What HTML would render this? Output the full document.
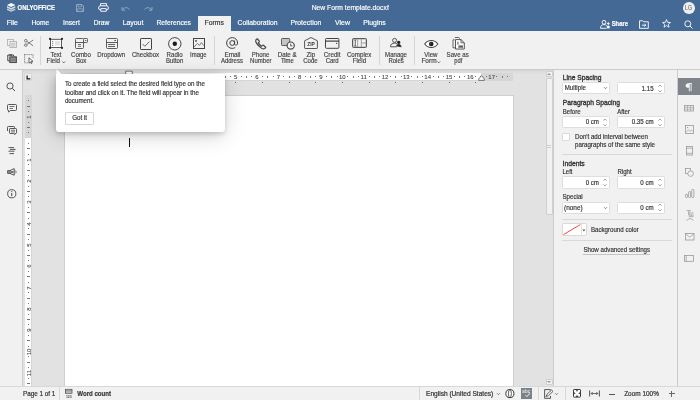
<!DOCTYPE html>
<html><head><meta charset="utf-8">
<style>
*{margin:0;padding:0;box-sizing:border-box}
html,body{width:700px;height:400px;overflow:hidden;background:#e2e2e2;font-family:"Liberation Sans",sans-serif;color:#333;-webkit-text-stroke:0.08px currentColor}
.a{position:absolute}
.t{position:absolute;white-space:nowrap;line-height:1}
#hdr{left:0;top:0;width:700px;height:31px;background:#446995}
#tb{left:0;top:31px;width:700px;height:39px;background:#f1f1f1;border-bottom:1px solid #cbcbcb}
#lp{left:0;top:70px;width:23px;height:316px;background:#f1f1f1;border-right:1px solid #cbcbcb}
#rp{left:552.5px;top:70px;width:125.5px;height:316px;background:#f1f1f1;border-left:1px solid #cbcbcb;border-right:1px solid #cbcbcb}
#rs{left:678px;top:70px;width:22px;height:316px;background:#f1f1f1}
#sb{left:0;top:386px;width:700px;height:14px;background:#f1f1f1;border-top:1px solid #d8d8d8}
.sep{position:absolute;width:1px;background:#d5d5d5}
svg{position:absolute;overflow:visible}
.tx text{font-family:"Liberation Sans",sans-serif}
</style></head><body>
<div id="root" class="a" style="left:0;top:0;width:700px;height:400px;background:#e2e2e2;will-change:transform">
<div id="hdr" class="a"></div>
<svg style="left:6.8px;top:3.4px" width="8.3" height="8.8" viewBox="0 0 8.3 8.8">
<path d="M4.15 0 L8.3 2 L4.15 4 L0 2Z" fill="#fff"/>
<path d="M0 3 L4.15 5 L8.3 3 V4.7 L4.15 6.7 L0 4.7Z" fill="#fff" opacity="0.78"/>
<path d="M0 5.4 L4.15 7.2 L8.3 5.4 V6.9 L4.15 8.8 L0 6.9Z" fill="#fff" opacity="0.7"/>
</svg>
<svg class="tx" style="left:15px;top:0px" width="45" height="14"><text x="2.60" y="10.20" font-size="6.50" fill="#fff" font-weight="bold" textLength="37.20" lengthAdjust="spacingAndGlyphs" stroke="#fff" stroke-width="0.16">ONLYOFFICE</text></svg>
<svg style="left:76px;top:4px" width="8" height="8" viewBox="0 0 8 8" opacity="0.45">
<path d="M0.5 0.5 H6 L7.5 2 V7.5 H0.5Z" fill="none" stroke="#fff" stroke-width="0.9"/>
<path d="M2 0.5 V2.8 H5.5 V0.5" fill="none" stroke="#fff" stroke-width="0.8"/>
<path d="M1.8 7.5 V4.8 H6.2 V7.5" fill="none" stroke="#fff" stroke-width="0.8"/>
</svg>
<svg style="left:97.5px;top:3.2px" width="11" height="9" viewBox="0 0 11 9">
<path d="M2.5 2.8 V0.6 H8.5 V2.8" fill="none" stroke="#fff" stroke-width="0.9"/>
<rect x="0.6" y="2.8" width="9.8" height="4.2" rx="2" fill="none" stroke="#fff" stroke-width="1"/>
<path d="M2.8 5.6 H8.2 V8.3 H2.8Z" fill="#446995" stroke="#fff" stroke-width="0.9"/>
</svg>
<svg style="left:121px;top:5.5px" width="9" height="5" viewBox="0 0 9 5" opacity="0.45">
<path d="M1 1 V4.2 H4" fill="none" stroke="#fff" stroke-width="0.9"/>
<path d="M1.2 4 C3 1.2 6.5 0.8 8.6 3.6" fill="none" stroke="#fff" stroke-width="0.9"/>
</svg>
<svg style="left:143.5px;top:5.5px" width="9" height="5" viewBox="0 0 9 5" opacity="0.45">
<path d="M8 1 V4.2 H5" fill="none" stroke="#fff" stroke-width="0.9"/>
<path d="M7.8 4 C6 1.2 2.5 0.8 0.4 3.6" fill="none" stroke="#fff" stroke-width="0.9"/>
</svg>
<svg class="tx" style="left:309px;top:0px" width="85" height="14"><text x="2.70" y="10.00" font-size="6.77" fill="#fff" stroke="#fff" stroke-width="0.16">New Form template.docxf</text></svg>
<div class="a" style="left:683px;top:2.4px;width:11.6px;height:11.6px;border-radius:50%;background:#eeeeee"></div>
<svg class="tx" style="left:683px;top:-1px" width="15" height="14"><text x="2.10" y="10.80" font-size="6.40" fill="#5f6670" textLength="6.90" lengthAdjust="spacingAndGlyphs" stroke="#5f6670" stroke-width="0.10">LG</text></svg>
<div class="a" style="left:198px;top:16px;width:33px;height:15px;background:#f1f1f1"></div>
<svg class="tx" style="left:4px;top:15px" width="19" height="14"><text x="2.70" y="10.20" font-size="7.01" fill="#fff" stroke="#fff" stroke-width="0.16">File</text></svg>
<svg class="tx" style="left:29px;top:15px" width="26" height="14"><text x="2.50" y="10.20" font-size="6.80" fill="#fff" textLength="17.70" lengthAdjust="spacingAndGlyphs" stroke="#fff" stroke-width="0.16">Home</text></svg>
<svg class="tx" style="left:61px;top:15px" width="25" height="14"><text x="2.00" y="10.20" font-size="6.80" fill="#fff" stroke="#fff" stroke-width="0.16">Insert</text></svg>
<svg class="tx" style="left:91px;top:15px" width="24" height="14"><text x="2.70" y="10.20" font-size="6.80" fill="#fff" textLength="15.60" lengthAdjust="spacingAndGlyphs" stroke="#fff" stroke-width="0.16">Draw</text></svg>
<svg class="tx" style="left:120px;top:15px" width="29" height="14"><text x="2.70" y="10.20" font-size="6.86" fill="#fff" stroke="#fff" stroke-width="0.16">Layout</text></svg>
<svg class="tx" style="left:154px;top:15px" width="43" height="14"><text x="2.40" y="10.20" font-size="6.80" fill="#fff" textLength="34.60" lengthAdjust="spacingAndGlyphs" stroke="#fff" stroke-width="0.16">References</text></svg>
<svg class="tx" style="left:202px;top:15px" width="27" height="14"><text x="2.60" y="10.20" font-size="6.85" fill="#333" stroke="#333" stroke-width="0.16">Forms</text></svg>
<svg class="tx" style="left:235px;top:15px" width="48" height="14"><text x="2.50" y="10.20" font-size="6.80" fill="#fff" textLength="40.00" lengthAdjust="spacingAndGlyphs" stroke="#fff" stroke-width="0.16">Collaboration</text></svg>
<svg class="tx" style="left:288px;top:15px" width="39" height="14"><text x="2.40" y="10.20" font-size="6.89" fill="#fff" stroke="#fff" stroke-width="0.16">Protection</text></svg>
<svg class="tx" style="left:333px;top:15px" width="23" height="14"><text x="2.00" y="10.20" font-size="6.98" fill="#fff" stroke="#fff" stroke-width="0.16">View</text></svg>
<svg class="tx" style="left:361px;top:15px" width="30" height="14"><text x="2.20" y="10.20" font-size="6.86" fill="#fff" stroke="#fff" stroke-width="0.16">Plugins</text></svg>
<svg style="left:599.5px;top:19.5px" width="11" height="9" viewBox="0 0 11 9">
<circle cx="4" cy="2.3" r="1.9" fill="none" stroke="#fff" stroke-width="0.9"/>
<path d="M0.5 8.3 C0.5 5.5 2 4.6 4 4.6 C5.3 4.6 6.2 5 6.8 5.8" fill="none" stroke="#fff" stroke-width="0.9"/>
<path d="M0.5 8.3 H6.5" fill="none" stroke="#fff" stroke-width="0.9"/>
<circle cx="8.3" cy="7" r="1.6" fill="#fff"/>
<path d="M8.3 2.2 V5 M6.9 3.6 H9.7" stroke="#fff" stroke-width="0.9"/>
</svg>
<svg class="tx" style="left:609px;top:16px" width="24" height="14"><text x="2.70" y="10.20" font-size="6.40" fill="#fff" font-weight="bold" textLength="16.30" lengthAdjust="spacingAndGlyphs" stroke="#fff" stroke-width="0.16">Share</text></svg>
<svg style="left:638.5px;top:19.5px" width="10" height="9" viewBox="0 0 10 9">
<path d="M0.5 0.8 H3.8 L4.8 1.8 H9.3 V8.3 H0.5Z" fill="none" stroke="#fff" stroke-width="0.9"/>
<path d="M2.8 5.2 H6.8 M5.3 3.7 L6.8 5.2 L5.3 6.7" fill="none" stroke="#fff" stroke-width="0.9"/>
</svg>
<svg style="left:661.5px;top:19px" width="9" height="9" viewBox="0 0 9 9">
<path d="M4.5 0.6 L5.6 3.3 L8.5 3.5 L6.3 5.3 L7 8.2 L4.5 6.6 L2 8.2 L2.7 5.3 L0.5 3.5 L3.4 3.3Z" fill="none" stroke="#fff" stroke-width="0.85" stroke-linejoin="round"/>
</svg>
<svg style="left:684px;top:19.5px" width="9" height="9" viewBox="0 0 9 9">
<circle cx="3.8" cy="3.8" r="3" fill="none" stroke="#fff" stroke-width="0.9"/>
<path d="M6 6 L8.5 8.5" stroke="#fff" stroke-width="1"/>
</svg>
<div id="tb" class="a"></div>
<svg style="left:7px;top:38.5px" width="10" height="9" viewBox="0 0 10 9" opacity="0.35">
<rect x="0.5" y="0.5" width="6" height="6" fill="none" stroke="#444" stroke-width="0.9"/>
<rect x="3" y="2.5" width="6.5" height="6" fill="#f1f1f1" stroke="#444" stroke-width="0.9"/>
<path d="M4 4.3 H8.5 M4 5.7 H8.5 M4 7.1 H8.5" stroke="#444" stroke-width="0.7"/>
</svg>
<svg style="left:23.8px;top:39px" width="10" height="8" viewBox="0 0 10 8">
<circle cx="1.8" cy="1.7" r="1.3" fill="none" stroke="#555" stroke-width="0.75"/>
<circle cx="1.8" cy="6.1" r="1.3" fill="none" stroke="#555" stroke-width="0.75"/>
<path d="M2.9 2.4 L9.2 6.8 M2.9 5.4 L9.2 1" stroke="#555" stroke-width="0.75"/>
</svg>
<svg style="left:7px;top:53.5px" width="10" height="9" viewBox="0 0 10 9">
<path d="M6.5 2 V1 H0.8 V6.8 H2.6" fill="none" stroke="#444" stroke-width="1"/>
<rect x="2.3" y="0.3" width="2.6" height="1.4" fill="#444"/>
<rect x="2.8" y="2.8" width="6.6" height="5.8" fill="#777" stroke="#444" stroke-width="0.9"/>
<path d="M3.5 4.5 H8.7 M3.5 6 H8.7 M3.5 7.4 H8.7" stroke="#aaa" stroke-width="0.5"/>
</svg>
<svg style="left:23.8px;top:53.5px" width="10" height="10" viewBox="0 0 10 10">
<path d="M0.5 0.6 H9 M0.6 0.5 V8.8" stroke="#444" stroke-width="0.9" stroke-dasharray="0.9 1.2"/>
<path d="M9 0.6 V4 M0.6 8.8 H4" stroke="#444" stroke-width="0.9" stroke-dasharray="0.9 1.2"/>
<path d="M5 3.8 L5 9.2 L6.3 8 L7.3 9.6 L8.1 9.1 L7.2 7.6 L9 7.4Z" fill="#fff" stroke="#444" stroke-width="0.8" stroke-linejoin="round"/>
</svg>
<div class="sep" style="left:39.5px;top:35.5px;height:29px"></div>
<svg style="left:49px;top:38px" width="14" height="11" viewBox="0 0 14 11">
<rect x="1.5" y="1.3" width="11" height="8.2" fill="#fff" stroke="#4a4a4a" stroke-width="0.9"/>
<rect x="5.8" y="2.9" width="5" height="4.6" fill="#e2e2e2"/>
<path d="M3.7 2.8 V8" stroke="#444" stroke-width="0.9" stroke-dasharray="1 1"/>
<circle cx="1" cy="0.9" r="1.05" fill="#222"/><circle cx="13" cy="0.9" r="1.05" fill="#222"/>
<circle cx="1" cy="9.9" r="1.05" fill="#222"/><circle cx="13" cy="9.9" r="1.05" fill="#222"/>
</svg>
<svg style="left:75px;top:38px" width="13" height="11" viewBox="0 0 13 11">
<rect x="0.5" y="0.5" width="8" height="10" rx="1" fill="none" stroke="#4d4d4d" stroke-width="0.9"/>
<path d="M8.5 0.5 H11.7 Q12.5 0.5 12.5 1.3 V3.7 Q12.5 4.5 11.7 4.5 H8.5" fill="none" stroke="#4d4d4d" stroke-width="0.9"/>
<path d="M0.5 4.5 H8.5" stroke="#4d4d4d" stroke-width="0.9"/>
<path d="M10.1 2.5 H11.3" stroke="#444" stroke-width="0.9"/>
<path d="M3 6.5 H6 M3 8.3 H6" stroke="#555" stroke-width="0.8"/>
</svg>
<svg style="left:106px;top:38px" width="12" height="11" viewBox="0 0 12 11">
<rect x="0.5" y="0.5" width="11" height="10" rx="1" fill="none" stroke="#4d4d4d" stroke-width="0.9"/>
<path d="M0.5 4.5 H11.5" stroke="#4d4d4d" stroke-width="0.9"/>
<path d="M8.3 2.5 H10" stroke="#444" stroke-width="0.9"/>
<path d="M2 6.5 H9 M2 8.5 H9" stroke="#555" stroke-width="0.9"/>
</svg>
<svg style="left:140px;top:38px" width="12" height="12" viewBox="0 0 12 12">
<rect x="0.5" y="0.5" width="11" height="11" rx="0.6" fill="none" stroke="#444" stroke-width="1"/>
<path d="M2.6 6 L4.8 8.3 L9.4 3.6" fill="none" stroke="#555" stroke-width="0.85"/>
</svg>
<svg style="left:168.2px;top:36.6px" width="14" height="14" viewBox="0 0 14 14">
<circle cx="6.8" cy="6.8" r="6.2" fill="none" stroke="#444" stroke-width="1"/>
<circle cx="6.8" cy="6.8" r="2.2" fill="#1a1a1a"/>
</svg>
<svg style="left:193px;top:38px" width="12" height="11" viewBox="0 0 12 11">
<rect x="0.5" y="0.5" width="11" height="10" fill="none" stroke="#444" stroke-width="1"/>
<circle cx="3" cy="2.9" r="0.9" fill="#444"/>
<path d="M1 9.2 L4.3 5.4 L6.4 7.4 L8.4 4.6 L11 7.8" fill="none" stroke="#555" stroke-width="0.75"/>
</svg>
<div class="sep" style="left:214.3px;top:35.5px;height:29px"></div>
<svg style="left:226px;top:37.4px" width="12.5" height="12" viewBox="0 0 12.5 12">
<circle cx="6.2" cy="6" r="2.4" fill="none" stroke="#444" stroke-width="1"/>
<path d="M8.6 3.5 V7 C8.6 8.8 11.6 8.8 11.6 6 C11.6 2.8 9.2 0.6 6.2 0.6 C3.1 0.6 0.6 3 0.6 6 C0.6 9.1 3.1 11.4 6.2 11.4 C7.4 11.4 8.4 11 9.2 10.6" fill="none" stroke="#444" stroke-width="1"/>
</svg>
<svg style="left:255px;top:37.5px" width="12" height="12" viewBox="0 0 12 12">
<path d="M2.6 1 L4.2 3.1 Q4.5 3.6 4.1 4.1 L3.3 4.9 Q4.4 7 6.6 8.2 L7.4 7.4 Q7.9 7 8.4 7.3 L10.5 8.9 Q10.9 9.3 10.5 9.8 L9.7 10.5 Q8.6 11.3 6.6 10.2 Q3.2 8.2 1.3 4.9 Q0.2 2.9 1 1.8 L1.7 1.1 Q2.2 0.7 2.6 1Z" fill="none" stroke="#4a4a4a" stroke-width="1.25" stroke-linejoin="round"/>
</svg>
<svg style="left:281px;top:38px" width="14" height="12" viewBox="0 0 14 12">
<rect x="0.5" y="0.5" width="8.2" height="7" rx="0.8" fill="#c4c4c4" stroke="#4d4d4d" stroke-width="0.9"/>
<circle cx="9.7" cy="7.6" r="3.6" fill="#f4f4f4" stroke="#4a4a4a" stroke-width="1.2"/>
<path d="M9.7 5.6 V7.9 H11.4" fill="none" stroke="#444" stroke-width="0.85"/>
</svg>
<svg style="left:304px;top:37px" width="14" height="12" viewBox="0 0 14 12">
<path d="M0.6 3.8 L7 0.5 L13.4 3.8 V10.9 Q13.4 11.5 12.8 11.5 H1.2 Q0.6 11.5 0.6 10.9Z" fill="none" stroke="#4d4d4d" stroke-width="0.95" stroke-linejoin="round"/>
<text x="7" y="9.3" font-family="Liberation Sans" font-weight="bold" font-size="4.9" text-anchor="middle" fill="#3a3a3a" style="-webkit-text-stroke:0">ZIP</text>
</svg>
<svg style="left:325.4px;top:38.2px" width="14.5" height="11" viewBox="0 0 14.5 11">
<rect x="0.5" y="0.5" width="13.4" height="9.8" rx="0.8" fill="none" stroke="#444" stroke-width="1"/>
<path d="M0.5 3.1 H13.9" stroke="#333" stroke-width="1.1"/>
<rect x="11" y="4.8" width="1.2" height="1" fill="#333"/>
</svg>
<svg style="left:352px;top:38px" width="15" height="10" viewBox="0 0 15 10">
<rect x="0.5" y="0.5" width="14" height="9" rx="1" fill="#a8a8a8" stroke="#4d4d4d" stroke-width="0.9"/>
<rect x="1.5" y="1.5" width="3.6" height="7" fill="#f4f4f4"/>
<path d="M2.3 2 H4.3 M3.3 2 V8 M2.3 8 H4.3" stroke="#333" stroke-width="0.7"/>
<rect x="6.2" y="1.5" width="2.6" height="7" fill="#f4f4f4"/>
<rect x="9.9" y="1.5" width="3.6" height="2.9" fill="#f4f4f4"/>
<rect x="9.9" y="5.6" width="3.6" height="2.9" fill="#f4f4f4"/>
</svg>
<div class="sep" style="left:378.5px;top:35.5px;height:29px"></div>
<svg style="left:390.3px;top:38.3px" width="12" height="10" viewBox="0 0 12 10">
<circle cx="4.6" cy="2.4" r="2" fill="none" stroke="#444" stroke-width="0.9"/>
<path d="M0.5 8.8 C0.5 6.2 2.2 5.1 4.6 5.1 C5.6 5.1 6.4 5.3 7 5.7" fill="none" stroke="#444" stroke-width="0.9"/>
<path d="M0.5 8.8 H6.8" stroke="#444" stroke-width="0.9"/>
<circle cx="8.7" cy="4.3" r="1.6" fill="#222"/>
<path d="M6.6 8.2 C6.6 6.8 7.5 6.2 8.7 6.2 C9.9 6.2 10.8 6.8 10.8 8.2 L11.3 9.2" fill="#222" stroke="#222" stroke-width="0.6"/>
</svg>
<div class="sep" style="left:413.8px;top:35.5px;height:29px"></div>
<svg style="left:423.5px;top:39.5px" width="14.5" height="8" viewBox="0 0 14.5 8">
<path d="M0.7 4 C2.6 1.3 4.7 0.55 7.25 0.55 C9.8 0.55 11.9 1.3 13.8 4 C11.9 6.7 9.8 7.45 7.25 7.45 C4.7 7.45 2.6 6.7 0.7 4Z" fill="#fff" stroke="#444" stroke-width="1.05"/>
<circle cx="7.25" cy="4" r="2.3" fill="#1e1e1e"/>
<circle cx="6.6" cy="3.4" r="0.5" fill="#888"/>
</svg>
<svg style="left:452px;top:37.2px" width="13" height="12.5" viewBox="0 0 13 12.5">
<path d="M2.5 2.8 H1 V10.8 H3.5" fill="none" stroke="#444" stroke-width="0.8"/>
<path d="M2.8 0.5 H6.8 L8 1.7" fill="none" stroke="#444" stroke-width="0.8"/>
<path d="M3.5 2.6 H9 L12.3 5.8 V12 H3.5Z" fill="#fff" stroke="#444" stroke-width="0.9"/>
<path d="M9 2.6 V5.8 H12.3" fill="none" stroke="#444" stroke-width="0.8"/>
<path d="M5.2 7.6 C6 7 5.4 5.6 5.9 4.8 C6.4 5.6 5.8 7 6.8 7.6" fill="none" stroke="#444" stroke-width="0.6"/>
<rect x="6.4" y="8.4" width="4.6" height="2.4" fill="#666"/>
</svg>
<svg class="tx" style="left:48px;top:47px" width="19" height="14"><text x="2.40" y="10.10" font-size="6.40" fill="#444" textLength="11.00" lengthAdjust="spacingAndGlyphs" stroke="#444" stroke-width="0.16">Text</text></svg>
<svg class="tx" style="left:44px;top:53px" width="22" height="14"><text x="2.60" y="10.10" font-size="6.40" fill="#444" textLength="13.50" lengthAdjust="spacingAndGlyphs" stroke="#444" stroke-width="0.16">Field</text></svg>
<svg class="tx" style="left:69px;top:47px" width="28" height="14"><text x="2.00" y="10.10" font-size="6.40" fill="#444" textLength="19.90" lengthAdjust="spacingAndGlyphs" stroke="#444" stroke-width="0.16">Combo</text></svg>
<svg class="tx" style="left:73px;top:53px" width="18" height="14"><text x="2.90" y="10.10" font-size="6.40" fill="#444" textLength="10.50" lengthAdjust="spacingAndGlyphs" stroke="#444" stroke-width="0.16">Box</text></svg>
<svg class="tx" style="left:95px;top:47px" width="36" height="14"><text x="2.30" y="10.10" font-size="6.40" fill="#444" textLength="27.90" lengthAdjust="spacingAndGlyphs" stroke="#444" stroke-width="0.16">Dropdown</text></svg>
<svg class="tx" style="left:129px;top:47px" width="35" height="14"><text x="2.90" y="10.10" font-size="6.40" fill="#444" textLength="27.30" lengthAdjust="spacingAndGlyphs" stroke="#444" stroke-width="0.16">Checkbox</text></svg>
<svg class="tx" style="left:164px;top:47px" width="24" height="14"><text x="2.60" y="10.10" font-size="6.40" fill="#444" textLength="16.00" lengthAdjust="spacingAndGlyphs" stroke="#444" stroke-width="0.16">Radio</text></svg>
<svg class="tx" style="left:163px;top:53px" width="25" height="14"><text x="2.90" y="10.10" font-size="6.40" fill="#444" textLength="17.40" lengthAdjust="spacingAndGlyphs" stroke="#444" stroke-width="0.16">Button</text></svg>
<svg class="tx" style="left:188px;top:47px" width="25" height="14"><text x="2.10" y="10.10" font-size="6.40" fill="#444" textLength="16.60" lengthAdjust="spacingAndGlyphs" stroke="#444" stroke-width="0.16">Image</text></svg>
<svg class="tx" style="left:222px;top:47px" width="24" height="14"><text x="2.40" y="10.10" font-size="6.40" fill="#444" stroke="#444" stroke-width="0.16">Email</text></svg>
<svg class="tx" style="left:218px;top:53px" width="30" height="14"><text x="2.90" y="10.10" font-size="6.40" fill="#444" textLength="22.10" lengthAdjust="spacingAndGlyphs" stroke="#444" stroke-width="0.16">Address</text></svg>
<svg class="tx" style="left:249px;top:47px" width="26" height="14"><text x="2.70" y="10.10" font-size="6.40" fill="#444" textLength="17.60" lengthAdjust="spacingAndGlyphs" stroke="#444" stroke-width="0.16">Phone</text></svg>
<svg class="tx" style="left:248px;top:53px" width="29" height="14"><text x="2.10" y="10.10" font-size="6.40" fill="#444" textLength="21.40" lengthAdjust="spacingAndGlyphs" stroke="#444" stroke-width="0.16">Number</text></svg>
<svg class="tx" style="left:275px;top:47px" width="27" height="14"><text x="2.70" y="10.10" font-size="6.40" fill="#444" textLength="19.00" lengthAdjust="spacingAndGlyphs" stroke="#444" stroke-width="0.16">Date &amp;</text></svg>
<svg class="tx" style="left:278px;top:53px" width="21" height="14"><text x="2.90" y="10.10" font-size="6.40" fill="#444" textLength="12.90" lengthAdjust="spacingAndGlyphs" stroke="#444" stroke-width="0.16">Time</text></svg>
<svg class="tx" style="left:304px;top:47px" width="17" height="14"><text x="2.40" y="10.10" font-size="6.40" fill="#444" textLength="8.80" lengthAdjust="spacingAndGlyphs" stroke="#444" stroke-width="0.16">Zip</text></svg>
<svg class="tx" style="left:301px;top:53px" width="22" height="14"><text x="2.20" y="10.10" font-size="6.40" fill="#444" textLength="14.50" lengthAdjust="spacingAndGlyphs" stroke="#444" stroke-width="0.16">Code</text></svg>
<svg class="tx" style="left:321px;top:47px" width="25" height="14"><text x="2.80" y="10.10" font-size="6.40" fill="#444" textLength="16.70" lengthAdjust="spacingAndGlyphs" stroke="#444" stroke-width="0.16">Credit</text></svg>
<svg class="tx" style="left:323px;top:53px" width="21" height="14"><text x="2.70" y="10.10" font-size="6.40" fill="#444" textLength="12.90" lengthAdjust="spacingAndGlyphs" stroke="#444" stroke-width="0.16">Card</text></svg>
<svg class="tx" style="left:344px;top:47px" width="32" height="14"><text x="2.90" y="10.10" font-size="6.40" fill="#444" textLength="24.40" lengthAdjust="spacingAndGlyphs" stroke="#444" stroke-width="0.16">Complex</text></svg>
<svg class="tx" style="left:350px;top:53px" width="22" height="14"><text x="2.70" y="10.10" font-size="6.40" fill="#444" textLength="13.50" lengthAdjust="spacingAndGlyphs" stroke="#444" stroke-width="0.16">Field</text></svg>
<svg class="tx" style="left:383px;top:47px" width="30" height="14"><text x="2.10" y="10.10" font-size="6.40" fill="#444" textLength="21.90" lengthAdjust="spacingAndGlyphs" stroke="#444" stroke-width="0.16">Manage</text></svg>
<svg class="tx" style="left:386px;top:53px" width="23" height="14"><text x="2.40" y="10.10" font-size="6.40" fill="#444" textLength="15.40" lengthAdjust="spacingAndGlyphs" stroke="#444" stroke-width="0.16">Roles</text></svg>
<svg class="tx" style="left:422px;top:47px" width="21" height="14"><text x="2.30" y="10.10" font-size="6.40" fill="#444" textLength="13.20" lengthAdjust="spacingAndGlyphs" stroke="#444" stroke-width="0.16">View</text></svg>
<svg class="tx" style="left:419px;top:53px" width="23" height="14"><text x="2.40" y="10.10" font-size="6.52" fill="#444" stroke="#444" stroke-width="0.16">Form</text></svg>
<svg class="tx" style="left:444px;top:47px" width="30" height="14"><text x="2.60" y="10.10" font-size="6.40" fill="#444" textLength="22.10" lengthAdjust="spacingAndGlyphs" stroke="#444" stroke-width="0.16">Save as</text></svg>
<svg class="tx" style="left:452px;top:53px" width="16" height="14"><text x="2.30" y="10.10" font-size="6.40" fill="#444" textLength="8.00" lengthAdjust="spacingAndGlyphs" stroke="#444" stroke-width="0.16">pdf</text></svg>
<svg style="left:61.7px;top:60.6px" width="3.5" height="2.5" viewBox="0 0 3.5 2.5"><path d="M0.4 0.5 L1.75 1.9 L3.1 0.5" fill="none" stroke="#444" stroke-width="0.8"/></svg>
<svg style="left:437.2px;top:60.6px" width="3.5" height="2.5" viewBox="0 0 3.5 2.5"><path d="M0.4 0.5 L1.75 1.9 L3.1 0.5" fill="none" stroke="#444" stroke-width="0.8"/></svg>
<div class="a" style="left:23px;top:70px;width:530px;height:4px;background:linear-gradient(#d6d6d6,#e2e2e2)"></div>
<div class="a" style="left:24.2px;top:73.2px;width:7.6px;height:8.3px;background:#efefef;border:0.6px solid #d6d6d6;border-radius:1px"></div>
<svg style="left:26px;top:75px" width="5" height="5" viewBox="0 0 5 5"><path d="M1.1 0.4 V3.9 H4.3" fill="none" stroke="#111" stroke-width="1.15"/></svg>
<div class="a" style="left:65px;top:73px;width:448px;height:7.5px;background:#d6d6d6"></div>
<div class="a" style="left:129px;top:73.3px;width:352px;height:7px;background:#fff"></div>
<div class="a" style="left:69.83px;top:76.3px;width:1px;height:1px;background:#777"></div>
<div class="a" style="left:75.17px;top:75.6px;width:1px;height:2.4px;background:#777"></div>
<div class="a" style="left:80.50px;top:76.3px;width:1px;height:1px;background:#777"></div>
<div class="t" style="left:76.33px;width:20px;text-align:center;top:74.3px;font-size:6px;color:#444">2</div>
<div class="a" style="left:91.17px;top:76.3px;width:1px;height:1px;background:#777"></div>
<div class="a" style="left:96.50px;top:75.6px;width:1px;height:2.4px;background:#777"></div>
<div class="a" style="left:101.83px;top:76.3px;width:1px;height:1px;background:#777"></div>
<div class="t" style="left:97.67px;width:20px;text-align:center;top:74.3px;font-size:6px;color:#444">1</div>
<div class="a" style="left:112.50px;top:76.3px;width:1px;height:1px;background:#777"></div>
<div class="a" style="left:117.83px;top:75.6px;width:1px;height:2.4px;background:#777"></div>
<div class="a" style="left:123.17px;top:76.3px;width:1px;height:1px;background:#777"></div>
<div class="a" style="left:133.83px;top:76.3px;width:1px;height:1px;background:#777"></div>
<div class="a" style="left:139.17px;top:75.6px;width:1px;height:2.4px;background:#777"></div>
<div class="a" style="left:144.50px;top:76.3px;width:1px;height:1px;background:#777"></div>
<div class="t" style="left:140.33px;width:20px;text-align:center;top:74.3px;font-size:6px;color:#444">1</div>
<div class="a" style="left:155.17px;top:76.3px;width:1px;height:1px;background:#777"></div>
<div class="a" style="left:160.50px;top:75.6px;width:1px;height:2.4px;background:#777"></div>
<div class="a" style="left:165.83px;top:76.3px;width:1px;height:1px;background:#777"></div>
<div class="t" style="left:161.67px;width:20px;text-align:center;top:74.3px;font-size:6px;color:#444">2</div>
<div class="a" style="left:176.50px;top:76.3px;width:1px;height:1px;background:#777"></div>
<div class="a" style="left:181.83px;top:75.6px;width:1px;height:2.4px;background:#777"></div>
<div class="a" style="left:187.17px;top:76.3px;width:1px;height:1px;background:#777"></div>
<div class="t" style="left:183.00px;width:20px;text-align:center;top:74.3px;font-size:6px;color:#444">3</div>
<div class="a" style="left:197.83px;top:76.3px;width:1px;height:1px;background:#777"></div>
<div class="a" style="left:203.17px;top:75.6px;width:1px;height:2.4px;background:#777"></div>
<div class="a" style="left:208.50px;top:76.3px;width:1px;height:1px;background:#777"></div>
<div class="t" style="left:204.33px;width:20px;text-align:center;top:74.3px;font-size:6px;color:#444">4</div>
<div class="a" style="left:219.17px;top:76.3px;width:1px;height:1px;background:#777"></div>
<div class="a" style="left:224.50px;top:75.6px;width:1px;height:2.4px;background:#777"></div>
<div class="a" style="left:229.83px;top:76.3px;width:1px;height:1px;background:#777"></div>
<div class="t" style="left:225.66px;width:20px;text-align:center;top:74.3px;font-size:6px;color:#444">5</div>
<div class="a" style="left:240.50px;top:76.3px;width:1px;height:1px;background:#777"></div>
<div class="a" style="left:245.83px;top:75.6px;width:1px;height:2.4px;background:#777"></div>
<div class="a" style="left:251.16px;top:76.3px;width:1px;height:1px;background:#777"></div>
<div class="t" style="left:247.00px;width:20px;text-align:center;top:74.3px;font-size:6px;color:#444">6</div>
<div class="a" style="left:261.83px;top:76.3px;width:1px;height:1px;background:#777"></div>
<div class="a" style="left:267.16px;top:75.6px;width:1px;height:2.4px;background:#777"></div>
<div class="a" style="left:272.50px;top:76.3px;width:1px;height:1px;background:#777"></div>
<div class="t" style="left:268.33px;width:20px;text-align:center;top:74.3px;font-size:6px;color:#444">7</div>
<div class="a" style="left:283.16px;top:76.3px;width:1px;height:1px;background:#777"></div>
<div class="a" style="left:288.50px;top:75.6px;width:1px;height:2.4px;background:#777"></div>
<div class="a" style="left:293.83px;top:76.3px;width:1px;height:1px;background:#777"></div>
<div class="t" style="left:289.66px;width:20px;text-align:center;top:74.3px;font-size:6px;color:#444">8</div>
<div class="a" style="left:304.50px;top:76.3px;width:1px;height:1px;background:#777"></div>
<div class="a" style="left:309.83px;top:75.6px;width:1px;height:2.4px;background:#777"></div>
<div class="a" style="left:315.16px;top:76.3px;width:1px;height:1px;background:#777"></div>
<div class="t" style="left:311.00px;width:20px;text-align:center;top:74.3px;font-size:6px;color:#444">9</div>
<div class="a" style="left:325.83px;top:76.3px;width:1px;height:1px;background:#777"></div>
<div class="a" style="left:331.16px;top:75.6px;width:1px;height:2.4px;background:#777"></div>
<div class="a" style="left:336.50px;top:76.3px;width:1px;height:1px;background:#777"></div>
<div class="t" style="left:332.33px;width:20px;text-align:center;top:74.3px;font-size:6px;color:#444">10</div>
<div class="a" style="left:347.16px;top:76.3px;width:1px;height:1px;background:#777"></div>
<div class="a" style="left:352.50px;top:75.6px;width:1px;height:2.4px;background:#777"></div>
<div class="a" style="left:357.83px;top:76.3px;width:1px;height:1px;background:#777"></div>
<div class="t" style="left:353.66px;width:20px;text-align:center;top:74.3px;font-size:6px;color:#444">11</div>
<div class="a" style="left:368.50px;top:76.3px;width:1px;height:1px;background:#777"></div>
<div class="a" style="left:373.83px;top:75.6px;width:1px;height:2.4px;background:#777"></div>
<div class="a" style="left:379.16px;top:76.3px;width:1px;height:1px;background:#777"></div>
<div class="t" style="left:375.00px;width:20px;text-align:center;top:74.3px;font-size:6px;color:#444">12</div>
<div class="a" style="left:389.83px;top:76.3px;width:1px;height:1px;background:#777"></div>
<div class="a" style="left:395.16px;top:75.6px;width:1px;height:2.4px;background:#777"></div>
<div class="a" style="left:400.50px;top:76.3px;width:1px;height:1px;background:#777"></div>
<div class="t" style="left:396.33px;width:20px;text-align:center;top:74.3px;font-size:6px;color:#444">13</div>
<div class="a" style="left:411.16px;top:76.3px;width:1px;height:1px;background:#777"></div>
<div class="a" style="left:416.50px;top:75.6px;width:1px;height:2.4px;background:#777"></div>
<div class="a" style="left:421.83px;top:76.3px;width:1px;height:1px;background:#777"></div>
<div class="t" style="left:417.66px;width:20px;text-align:center;top:74.3px;font-size:6px;color:#444">14</div>
<div class="a" style="left:432.50px;top:76.3px;width:1px;height:1px;background:#777"></div>
<div class="a" style="left:437.83px;top:75.6px;width:1px;height:2.4px;background:#777"></div>
<div class="a" style="left:443.16px;top:76.3px;width:1px;height:1px;background:#777"></div>
<div class="t" style="left:439.00px;width:20px;text-align:center;top:74.3px;font-size:6px;color:#444">15</div>
<div class="a" style="left:453.83px;top:76.3px;width:1px;height:1px;background:#777"></div>
<div class="a" style="left:459.16px;top:75.6px;width:1px;height:2.4px;background:#777"></div>
<div class="a" style="left:464.49px;top:76.3px;width:1px;height:1px;background:#777"></div>
<div class="t" style="left:460.33px;width:20px;text-align:center;top:74.3px;font-size:6px;color:#444">16</div>
<div class="a" style="left:475.16px;top:76.3px;width:1px;height:1px;background:#777"></div>
<div class="a" style="left:480.49px;top:75.6px;width:1px;height:2.4px;background:#777"></div>
<div class="a" style="left:485.83px;top:76.3px;width:1px;height:1px;background:#777"></div>
<div class="t" style="left:481.66px;width:20px;text-align:center;top:74.3px;font-size:6px;color:#444">17</div>
<div class="a" style="left:496.49px;top:76.3px;width:1px;height:1px;background:#777"></div>
<div class="a" style="left:501.83px;top:75.6px;width:1px;height:2.4px;background:#777"></div>
<div class="a" style="left:507.16px;top:76.3px;width:1px;height:1px;background:#777"></div>
<div class="a" style="left:128.50px;top:81.8px;width:1px;height:1.2px;background:#666"></div>
<div class="a" style="left:155.17px;top:81.8px;width:1px;height:1.2px;background:#666"></div>
<div class="a" style="left:181.83px;top:81.8px;width:1px;height:1.2px;background:#666"></div>
<div class="a" style="left:208.50px;top:81.8px;width:1px;height:1.2px;background:#666"></div>
<div class="a" style="left:235.17px;top:81.8px;width:1px;height:1.2px;background:#666"></div>
<div class="a" style="left:261.84px;top:81.8px;width:1px;height:1.2px;background:#666"></div>
<div class="a" style="left:288.50px;top:81.8px;width:1px;height:1.2px;background:#666"></div>
<div class="a" style="left:315.17px;top:81.8px;width:1px;height:1.2px;background:#666"></div>
<div class="a" style="left:341.84px;top:81.8px;width:1px;height:1.2px;background:#666"></div>
<div class="a" style="left:368.50px;top:81.8px;width:1px;height:1.2px;background:#666"></div>
<div class="a" style="left:395.17px;top:81.8px;width:1px;height:1.2px;background:#666"></div>
<div class="a" style="left:421.84px;top:81.8px;width:1px;height:1.2px;background:#666"></div>
<div class="a" style="left:448.50px;top:81.8px;width:1px;height:1.2px;background:#666"></div>
<div class="a" style="left:475.17px;top:81.8px;width:1px;height:1.2px;background:#666"></div>
<svg style="left:477.5px;top:74.5px" width="7" height="6" viewBox="0 0 7 6"><path d="M3.5 0.6 L6.3 4 V5.4 H0.7 V4Z" fill="#fff" stroke="#555" stroke-width="0.8"/></svg>
<svg style="left:125px;top:70px" width="8" height="5" viewBox="0 0 8 5"><path d="M0.7 4 V1.2 H7.3 V4" fill="#fff" stroke="#555" stroke-width="0.8"/></svg>
<div class="a" style="left:24.5px;top:95.3px;width:7px;height:291px;background:#d6d6d6"></div>
<div class="a" style="left:24.8px;top:138px;width:6.5px;height:248px;background:#fff"></div>
<div class="a" style="left:27.5px;top:100.17px;width:1px;height:1px;background:#777"></div>
<div class="a" style="left:26.5px;top:105.50px;width:3px;height:1px;background:#777"></div>
<div class="a" style="left:27.5px;top:110.83px;width:1px;height:1px;background:#777"></div>
<div class="t" style="left:18.60px;width:20px;text-align:center;top:113.97px;font-size:6px;color:#444;transform:rotate(-90deg)">1</div>
<div class="a" style="left:27.5px;top:121.50px;width:1px;height:1px;background:#777"></div>
<div class="a" style="left:26.5px;top:126.83px;width:3px;height:1px;background:#777"></div>
<div class="a" style="left:27.5px;top:132.17px;width:1px;height:1px;background:#777"></div>
<div class="a" style="left:27.5px;top:142.83px;width:1px;height:1px;background:#777"></div>
<div class="a" style="left:26.5px;top:148.17px;width:3px;height:1px;background:#777"></div>
<div class="a" style="left:27.5px;top:153.50px;width:1px;height:1px;background:#777"></div>
<div class="t" style="left:18.60px;width:20px;text-align:center;top:156.63px;font-size:6px;color:#444;transform:rotate(-90deg)">1</div>
<div class="a" style="left:27.5px;top:164.17px;width:1px;height:1px;background:#777"></div>
<div class="a" style="left:26.5px;top:169.50px;width:3px;height:1px;background:#777"></div>
<div class="a" style="left:27.5px;top:174.83px;width:1px;height:1px;background:#777"></div>
<div class="t" style="left:18.60px;width:20px;text-align:center;top:177.97px;font-size:6px;color:#444;transform:rotate(-90deg)">2</div>
<div class="a" style="left:27.5px;top:185.50px;width:1px;height:1px;background:#777"></div>
<div class="a" style="left:26.5px;top:190.83px;width:3px;height:1px;background:#777"></div>
<div class="a" style="left:27.5px;top:196.17px;width:1px;height:1px;background:#777"></div>
<div class="t" style="left:18.60px;width:20px;text-align:center;top:199.30px;font-size:6px;color:#444;transform:rotate(-90deg)">3</div>
<div class="a" style="left:27.5px;top:206.83px;width:1px;height:1px;background:#777"></div>
<div class="a" style="left:26.5px;top:212.17px;width:3px;height:1px;background:#777"></div>
<div class="a" style="left:27.5px;top:217.50px;width:1px;height:1px;background:#777"></div>
<div class="t" style="left:18.60px;width:20px;text-align:center;top:220.63px;font-size:6px;color:#444;transform:rotate(-90deg)">4</div>
<div class="a" style="left:27.5px;top:228.17px;width:1px;height:1px;background:#777"></div>
<div class="a" style="left:26.5px;top:233.50px;width:3px;height:1px;background:#777"></div>
<div class="a" style="left:27.5px;top:238.83px;width:1px;height:1px;background:#777"></div>
<div class="t" style="left:18.60px;width:20px;text-align:center;top:241.97px;font-size:6px;color:#444;transform:rotate(-90deg)">5</div>
<div class="a" style="left:27.5px;top:249.50px;width:1px;height:1px;background:#777"></div>
<div class="a" style="left:26.5px;top:254.83px;width:3px;height:1px;background:#777"></div>
<div class="a" style="left:27.5px;top:260.16px;width:1px;height:1px;background:#777"></div>
<div class="t" style="left:18.60px;width:20px;text-align:center;top:263.30px;font-size:6px;color:#444;transform:rotate(-90deg)">6</div>
<div class="a" style="left:27.5px;top:270.83px;width:1px;height:1px;background:#777"></div>
<div class="a" style="left:26.5px;top:276.16px;width:3px;height:1px;background:#777"></div>
<div class="a" style="left:27.5px;top:281.50px;width:1px;height:1px;background:#777"></div>
<div class="t" style="left:18.60px;width:20px;text-align:center;top:284.63px;font-size:6px;color:#444;transform:rotate(-90deg)">7</div>
<div class="a" style="left:27.5px;top:292.16px;width:1px;height:1px;background:#777"></div>
<div class="a" style="left:26.5px;top:297.50px;width:3px;height:1px;background:#777"></div>
<div class="a" style="left:27.5px;top:302.83px;width:1px;height:1px;background:#777"></div>
<div class="t" style="left:18.60px;width:20px;text-align:center;top:305.96px;font-size:6px;color:#444;transform:rotate(-90deg)">8</div>
<div class="a" style="left:27.5px;top:313.50px;width:1px;height:1px;background:#777"></div>
<div class="a" style="left:26.5px;top:318.83px;width:3px;height:1px;background:#777"></div>
<div class="a" style="left:27.5px;top:324.16px;width:1px;height:1px;background:#777"></div>
<div class="t" style="left:18.60px;width:20px;text-align:center;top:327.30px;font-size:6px;color:#444;transform:rotate(-90deg)">9</div>
<div class="a" style="left:27.5px;top:334.83px;width:1px;height:1px;background:#777"></div>
<div class="a" style="left:26.5px;top:340.16px;width:3px;height:1px;background:#777"></div>
<div class="a" style="left:27.5px;top:345.50px;width:1px;height:1px;background:#777"></div>
<div class="t" style="left:18.60px;width:20px;text-align:center;top:348.63px;font-size:6px;color:#444;transform:rotate(-90deg)">10</div>
<div class="a" style="left:27.5px;top:356.16px;width:1px;height:1px;background:#777"></div>
<div class="a" style="left:26.5px;top:361.50px;width:3px;height:1px;background:#777"></div>
<div class="a" style="left:27.5px;top:366.83px;width:1px;height:1px;background:#777"></div>
<div class="t" style="left:18.60px;width:20px;text-align:center;top:369.96px;font-size:6px;color:#444;transform:rotate(-90deg)">11</div>
<div class="a" style="left:27.5px;top:377.50px;width:1px;height:1px;background:#777"></div>
<div class="a" style="left:26.5px;top:382.83px;width:3px;height:1px;background:#777"></div>
<div class="a" style="left:64px;top:94.5px;width:450px;height:300px;background:#fff;border:1px solid #cfcfcf;border-bottom:none"></div>
<div class="a" style="left:128.7px;top:138px;width:1.2px;height:9.4px;background:#111"></div>
<div class="a" style="left:545.5px;top:70.5px;width:7px;height:6.5px;background:#f1f1f1;border:0.5px solid #d0d0d0;border-radius:1px"></div>
<svg style="left:546px;top:72px" width="6" height="4" viewBox="0 0 6 4"><path d="M1 3 L3 1 L5 3Z" fill="#999"/></svg>
<div class="a" style="left:545.5px;top:77.5px;width:7px;height:137.5px;background:#f1f1f1;border:0.5px solid #cfcfcf;border-radius:1px"></div>
<div class="a" style="left:547px;top:144.5px;width:4px;height:3px;border-top:1px solid #ccc;border-bottom:1px solid #ccc"></div>
<div class="a" style="left:545.5px;top:378.5px;width:7px;height:6.5px;background:#f1f1f1;border:0.5px solid #d0d0d0;border-radius:1px"></div>
<svg style="left:546px;top:380px" width="6" height="4" viewBox="0 0 6 4"><path d="M1 1 L3 3 L5 1Z" fill="#999"/></svg>
<div class="a" style="left:56px;top:73.5px;width:169px;height:58px;background:#fff;border-radius:0 2px 3px 3px;box-shadow:0 2px 4px rgba(0,0,0,0.12),0 4px 22px rgba(0,0,0,0.16),-3px 2px 12px rgba(0,0,0,0.12)"></div>
<svg style="left:55.5px;top:68.5px" width="6" height="6" viewBox="0 0 6 6"><path d="M0.5 0.2 L5.5 5.2 H0.5Z" fill="#fff"/></svg>
<div class="a" style="left:65px;top:111.8px;width:29px;height:13.3px;border:1px solid #d8d8d8;border-radius:1px;background:#fff"></div>
<svg class="tx" style="left:62px;top:76px" width="148" height="14"><text x="2.90" y="10.10" font-size="6.40" fill="#333" textLength="140.00" lengthAdjust="spacingAndGlyphs" stroke="#333" stroke-width="0.16">To create a field select the desired field type on the</text></svg>
<svg class="tx" style="left:62px;top:84px" width="142" height="14"><text x="2.90" y="10.60" font-size="6.40" fill="#333" textLength="134.00" lengthAdjust="spacingAndGlyphs" stroke="#333" stroke-width="0.16">toolbar and click on it. The field will appear in the</text></svg>
<svg class="tx" style="left:62px;top:93px" width="37" height="14"><text x="2.90" y="10.10" font-size="6.40" fill="#333" textLength="29.04" lengthAdjust="spacingAndGlyphs" stroke="#333" stroke-width="0.16">document.</text></svg>
<svg class="tx" style="left:70px;top:110px" width="23" height="14"><text x="2.30" y="10.30" font-size="6.40" fill="#333" textLength="14.80" lengthAdjust="spacingAndGlyphs" stroke="#333" stroke-width="0.16">Got it</text></svg>
<div id="lp" class="a"></div>
<div id="rp" class="a"></div>
<div id="rs" class="a"></div>
<div id="sb" class="a"></div>
<svg style="left:6px;top:81.5px" width="10" height="10" viewBox="0 0 10 10">
<circle cx="4" cy="4" r="3.1" fill="none" stroke="#444" stroke-width="0.9"/>
<path d="M6.3 6.3 L9 9" stroke="#444" stroke-width="1"/>
</svg>
<svg style="left:6.5px;top:103.5px" width="10" height="9" viewBox="0 0 10 9">
<path d="M1.5 0.5 H8.5 Q9.5 0.5 9.5 1.5 V5.5 Q9.5 6.5 8.5 6.5 H3.2 L1.6 8.2 V6.5 H1.5 Q0.5 6.5 0.5 5.5 V1.5 Q0.5 0.5 1.5 0.5Z" fill="none" stroke="#444" stroke-width="0.9" stroke-linejoin="round"/>
<path d="M2.5 2.5 H7.5 M2.5 4.5 H6" stroke="#555" stroke-width="0.8"/>
</svg>
<svg style="left:6.5px;top:125.5px" width="10" height="9" viewBox="0 0 10 9">
<path d="M0.5 5 V1.3 Q0.5 0.5 1.3 0.5 H6.8 Q7.5 0.5 7.5 1.3 V2" fill="none" stroke="#444" stroke-width="0.9"/>
<path d="M3.2 2.5 H8.7 Q9.5 2.5 9.5 3.3 V6.7 Q9.5 7.5 8.7 7.5 H8 V8.6 L6.8 7.5 H3.2 Q2.5 7.5 2.5 6.7 V3.3 Q2.5 2.5 3.2 2.5Z" fill="none" stroke="#444" stroke-width="0.9" stroke-linejoin="round"/>
<path d="M4 4.3 H8 M4 5.9 H8" stroke="#555" stroke-width="0.8"/>
</svg>
<svg style="left:8px;top:147px" width="8" height="7.5" viewBox="0 0 8 7.5">
<path d="M0.5 0.6 H6 M2 2.4 H7.6 M0.5 4.2 H6.5 M1.5 6.6 H6" stroke="#444" stroke-width="0.9"/>
</svg>
<svg style="left:6.5px;top:168px" width="10" height="8" viewBox="0 0 10 8">
<path d="M0.6 2.6 H3 L7.2 0.6 V7.2 L3 5.4 H0.6Z" fill="none" stroke="#444" stroke-width="0.9" stroke-linejoin="round"/>
<path d="M3 2.6 V5.4" stroke="#444" stroke-width="0.8"/>
<path d="M8.2 2.4 C9.4 3.2 9.4 4.6 8.2 5.4" fill="none" stroke="#444" stroke-width="0.8"/>
<path d="M1.3 3.3 H2.5 V4.7 H1.3Z M3.6 3.3 H6.4 V4.7 H3.6Z" fill="#444"/>
</svg>
<svg style="left:6.8px;top:189px" width="9.5" height="9.5" viewBox="0 0 9.5 9.5">
<circle cx="4.75" cy="4.75" r="4.1" fill="none" stroke="#444" stroke-width="0.9"/>
<path d="M4.75 4 V7.2" stroke="#444" stroke-width="1"/>
<circle cx="4.75" cy="2.6" r="0.6" fill="#444"/>
</svg>
<div class="a" style="left:678px;top:78px;width:22px;height:17px;background:#7e848a"></div>
<svg style="left:685px;top:82.5px" width="8" height="9" viewBox="0 0 8 9"><path d="M3.9 0.5 H2.9 C1.3 0.5 0.6 1.5 0.6 2.6 C0.6 3.7 1.3 4.7 2.9 4.7 H3.9Z" fill="#fff"/><path d="M3.6 0.5 H6.8 M4.3 0.5 V8.3 M6.1 0.5 V8.3" stroke="#fff" stroke-width="0.85"/></svg>
<svg style="left:684.3px;top:105.2px" width="10" height="6.5" viewBox="0 0 10 6.5" opacity="0.5">
<rect x="0.5" y="0.5" width="9" height="5.5" fill="none" stroke="#444" stroke-width="0.8"/>
<path d="M0.5 2.3 H9.5 M0.5 4.1 H9.5 M3.5 0.5 V6 M6.5 0.5 V6" stroke="#444" stroke-width="0.6"/>
</svg>
<svg style="left:684.8px;top:124.6px" width="9" height="9" viewBox="0 0 9 9" opacity="0.5">
<rect x="0.5" y="0.5" width="8" height="8" fill="none" stroke="#444" stroke-width="0.8"/>
<circle cx="2.6" cy="2.6" r="0.7" fill="#444"/>
<path d="M0.8 7.5 L3.5 4.8 L5.2 6.3 L6.5 5 L8.3 6.8" fill="none" stroke="#444" stroke-width="0.7"/>
</svg>
<svg style="left:685.8px;top:146.3px" width="7" height="9.5" viewBox="0 0 7 9.5" opacity="0.5">
<rect x="0.5" y="0.5" width="6" height="8.5" fill="none" stroke="#444" stroke-width="0.8"/>
<path d="M0.5 2.2 H6.5 M0.5 7.3 H6.5" stroke="#444" stroke-width="0.7"/>
</svg>
<svg style="left:684.8px;top:168px" width="9" height="9" viewBox="0 0 9 9" opacity="0.5">
<rect x="0.5" y="0.5" width="5" height="5" fill="none" stroke="#444" stroke-width="0.8"/>
<circle cx="5.6" cy="5.6" r="2.8" fill="#f1f1f1" stroke="#444" stroke-width="0.8"/>
</svg>
<svg style="left:684.8px;top:189.3px" width="9.5" height="9" viewBox="0 0 9.5 9" opacity="0.5">
<rect x="0.5" y="5.2" width="2" height="3.3" rx="0.6" fill="none" stroke="#444" stroke-width="0.8"/>
<rect x="3.6" y="2.6" width="2" height="5.9" rx="0.6" fill="none" stroke="#444" stroke-width="0.8"/>
<rect x="6.7" y="0.5" width="2.2" height="8" rx="0.6" fill="none" stroke="#444" stroke-width="0.8"/>
</svg>
<svg style="left:685.5px;top:209.5px" width="8" height="11" viewBox="0 0 8 11" opacity="0.5">
<path d="M0.6 0.6 H4.8 M2.7 0.6 V5.2" stroke="#444" stroke-width="0.8"/>
<rect x="3.2" y="2.8" width="3.8" height="4" fill="none" stroke="#444" stroke-width="0.6"/>
<path d="M4.2 4.3 H5.8 V6.2 H4.4 Q4 5.3 5.8 5.2" fill="none" stroke="#444" stroke-width="0.6"/>
<path d="M0.6 10.4 Q4 6.8 7.4 10.4" fill="none" stroke="#444" stroke-width="0.8"/>
</svg>
<svg style="left:684.5px;top:232.6px" width="9.5" height="7.5" viewBox="0 0 9.5 7.5" opacity="0.5">
<rect x="0.5" y="0.5" width="8.5" height="6.5" fill="none" stroke="#444" stroke-width="0.8"/>
<path d="M0.5 0.8 L4.75 4.2 L9 0.8" fill="none" stroke="#444" stroke-width="0.7"/>
</svg>
<svg style="left:684.3px;top:254.6px" width="10" height="6.8" viewBox="0 0 10 6.8" opacity="0.5">
<rect x="0.5" y="0.5" width="9" height="5.8" fill="none" stroke="#444" stroke-width="0.8"/>
<path d="M2.2 0.5 V6.3" stroke="#444" stroke-width="0.7"/>
</svg>
<svg class="tx" style="left:560px;top:70px" width="47" height="14"><text x="2.75" y="10.00" font-size="6.70" fill="#333" stroke="#333" stroke-width="0.32">Line Spacing</text></svg>
<div class="a" style="left:562px;top:82px;width:48px;height:12px;background:#fff;border:1px solid #dedede;border-radius:1.5px"></div>
<svg class="tx" style="left:562px;top:80px" width="29" height="14"><text x="2.75" y="10.00" font-size="6.40" fill="#333" textLength="21.20" lengthAdjust="spacingAndGlyphs" stroke="#333" stroke-width="0.16">Multiple</text></svg>
<svg style="left:603.2px;top:86.2px" width="5" height="4" viewBox="0 0 5 4"><path d="M1 1.2 L2.5 2.7 L4 1.2" fill="none" stroke="#555" stroke-width="0.7"/></svg>
<div class="a" style="left:617px;top:82px;width:48px;height:12px;background:#fff;border:1px solid #dedede;border-radius:1.5px"></div>
<svg class="tx" style="left:639px;top:80px" width="20" height="14"><text x="2.63" y="10.50" font-size="6.40" fill="#333" textLength="11.97" lengthAdjust="spacingAndGlyphs" stroke="#333" stroke-width="0.16">1.15</text></svg>
<svg style="left:656.8px;top:83.7px" width="6" height="9" viewBox="0 0 6 9"><path d="M1.4 2.6 L3 1.1 L4.6 2.6 M1.4 6.4 L3 7.9 L4.6 6.4" fill="none" stroke="#666" stroke-width="0.6"/></svg>
<svg class="tx" style="left:560px;top:95px" width="65" height="14"><text x="2.75" y="10.00" font-size="6.69" fill="#333" stroke="#333" stroke-width="0.32">Paragraph Spacing</text></svg>
<svg class="tx" style="left:560px;top:103px" width="26" height="14"><text x="2.75" y="10.75" font-size="6.40" fill="#333" textLength="17.90" lengthAdjust="spacingAndGlyphs" stroke="#333" stroke-width="0.16">Before</text></svg>
<svg class="tx" style="left:615px;top:103px" width="21" height="14"><text x="2.20" y="10.75" font-size="6.40" fill="#333" textLength="12.70" lengthAdjust="spacingAndGlyphs" stroke="#333" stroke-width="0.16">After</text></svg>
<div class="a" style="left:562px;top:116px;width:48px;height:12px;background:#fff;border:1px solid #dedede;border-radius:1.5px"></div>
<svg class="tx" style="left:583px;top:114px" width="21" height="14"><text x="2.67" y="10.40" font-size="6.40" fill="#333" textLength="13.33" lengthAdjust="spacingAndGlyphs" stroke="#333" stroke-width="0.16">0 cm</text></svg>
<svg style="left:601.8px;top:117.5px" width="6" height="9" viewBox="0 0 6 9"><path d="M1.4 2.6 L3 1.1 L4.6 2.6 M1.4 6.4 L3 7.9 L4.6 6.4" fill="none" stroke="#666" stroke-width="0.6"/></svg>
<div class="a" style="left:617px;top:116px;width:48px;height:12px;background:#fff;border:1px solid #dedede;border-radius:1.5px"></div>
<svg class="tx" style="left:629px;top:114px" width="30" height="14"><text x="2.73" y="10.40" font-size="6.40" fill="#333" textLength="21.87" lengthAdjust="spacingAndGlyphs" stroke="#333" stroke-width="0.16">0.35 cm</text></svg>
<svg style="left:656.8px;top:117.5px" width="6" height="9" viewBox="0 0 6 9"><path d="M1.4 2.6 L3 1.1 L4.6 2.6 M1.4 6.4 L3 7.9 L4.6 6.4" fill="none" stroke="#666" stroke-width="0.6"/></svg>
<div class="a" style="left:562px;top:133px;width:8px;height:8px;background:#fff;border:1px solid #dadada;border-radius:1px"></div>
<svg class="tx" style="left:573px;top:129px" width="81" height="14"><text x="2.00" y="10.10" font-size="6.40" fill="#333" textLength="72.90" lengthAdjust="spacingAndGlyphs" stroke="#333" stroke-width="0.16">Don&#x27;t add interval between</text></svg>
<svg class="tx" style="left:573px;top:137px" width="88" height="14"><text x="2.00" y="10.30" font-size="6.40" fill="#333" textLength="80.00" lengthAdjust="spacingAndGlyphs" stroke="#333" stroke-width="0.16">paragraphs of the same style</text></svg>
<div class="a" style="left:562px;top:154px;width:110px;height:1px;background:#d8d8d8"></div>
<svg class="tx" style="left:560px;top:155px" width="30" height="14"><text x="2.50" y="10.50" font-size="6.77" fill="#333" stroke="#333" stroke-width="0.32">Indents</text></svg>
<svg class="tx" style="left:560px;top:163px" width="18" height="14"><text x="2.50" y="10.70" font-size="6.40" fill="#333" textLength="10.00" lengthAdjust="spacingAndGlyphs" stroke="#333" stroke-width="0.16">Left</text></svg>
<svg class="tx" style="left:615px;top:163px" width="22" height="14"><text x="2.40" y="10.70" font-size="6.40" fill="#333" textLength="14.20" lengthAdjust="spacingAndGlyphs" stroke="#333" stroke-width="0.16">Right</text></svg>
<div class="a" style="left:562px;top:176px;width:48px;height:12.5px;background:#fff;border:1px solid #dedede;border-radius:1.5px"></div>
<svg class="tx" style="left:583px;top:174px" width="21" height="14"><text x="2.67" y="10.70" font-size="6.40" fill="#333" textLength="13.33" lengthAdjust="spacingAndGlyphs" stroke="#333" stroke-width="0.16">0 cm</text></svg>
<svg style="left:601.8px;top:177.9px" width="6" height="9" viewBox="0 0 6 9"><path d="M1.4 2.6 L3 1.1 L4.6 2.6 M1.4 6.4 L3 7.9 L4.6 6.4" fill="none" stroke="#666" stroke-width="0.6"/></svg>
<div class="a" style="left:617px;top:176px;width:48px;height:12.5px;background:#fff;border:1px solid #dedede;border-radius:1.5px"></div>
<svg class="tx" style="left:638px;top:174px" width="21" height="14"><text x="2.27" y="10.70" font-size="6.40" fill="#333" textLength="13.33" lengthAdjust="spacingAndGlyphs" stroke="#333" stroke-width="0.16">0 cm</text></svg>
<svg style="left:656.8px;top:177.9px" width="6" height="9" viewBox="0 0 6 9"><path d="M1.4 2.6 L3 1.1 L4.6 2.6 M1.4 6.4 L3 7.9 L4.6 6.4" fill="none" stroke="#666" stroke-width="0.6"/></svg>
<svg class="tx" style="left:560px;top:189px" width="28" height="14"><text x="2.50" y="10.20" font-size="6.40" fill="#333" textLength="20.20" lengthAdjust="spacingAndGlyphs" stroke="#333" stroke-width="0.16">Special</text></svg>
<div class="a" style="left:562px;top:202px;width:48px;height:12px;background:#fff;border:1px solid #dedede;border-radius:1.5px"></div>
<svg class="tx" style="left:562px;top:199px" width="27" height="14"><text x="2.00" y="10.60" font-size="6.47" fill="#333" stroke="#333" stroke-width="0.16">(none)</text></svg>
<svg style="left:603.2px;top:205.9px" width="5" height="4" viewBox="0 0 5 4"><path d="M1 1.2 L2.5 2.7 L4 1.2" fill="none" stroke="#555" stroke-width="0.7"/></svg>
<div class="a" style="left:617px;top:202px;width:48px;height:12px;background:#fff;border:1px solid #dedede;border-radius:1.5px"></div>
<svg class="tx" style="left:638px;top:200px" width="21" height="14"><text x="2.27" y="10.20" font-size="6.40" fill="#333" textLength="13.33" lengthAdjust="spacingAndGlyphs" stroke="#333" stroke-width="0.16">0 cm</text></svg>
<svg style="left:656.8px;top:203.4px" width="6" height="9" viewBox="0 0 6 9"><path d="M1.4 2.6 L3 1.1 L4.6 2.6 M1.4 6.4 L3 7.9 L4.6 6.4" fill="none" stroke="#666" stroke-width="0.6"/></svg>
<div class="a" style="left:562px;top:218.5px;width:110px;height:1px;background:#d8d8d8"></div>
<div class="a" style="left:562.3px;top:223.4px;width:25px;height:12.5px;background:#fff;border:0.7px solid #d9d9d9;border-radius:1.5px"></div>
<div class="a" style="left:580.6px;top:223.8px;width:0.7px;height:11.8px;background:#e2e2e2"></div>
<svg style="left:563px;top:224.4px" width="18" height="11" viewBox="0 0 18 11"><path d="M0.4 10.6 L17.4 0.6" stroke="#ef4a4a" stroke-width="1"/></svg>
<svg style="left:582.2px;top:228.6px" width="4" height="3" viewBox="0 0 4 3"><path d="M0.4 0.6 H3.4 L1.9 2.4Z" fill="#555"/></svg>
<svg class="tx" style="left:588px;top:222px" width="56" height="14"><text x="2.90" y="10.30" font-size="6.40" fill="#333" textLength="47.80" lengthAdjust="spacingAndGlyphs" stroke="#333" stroke-width="0.16">Background color</text></svg>
<div class="a" style="left:562px;top:240px;width:110px;height:1px;background:#d8d8d8"></div>
<svg class="tx" style="left:581px;top:242px" width="75" height="14"><text x="2.40" y="10.00" font-size="6.40" fill="#333" textLength="66.70" lengthAdjust="spacingAndGlyphs" stroke="#333" stroke-width="0.16">Show advanced settings</text></svg>
<div class="a" style="left:583.4px;top:254px;width:67px;height:0;border-top:0.8px solid #c4c4c4"></div>
<svg class="tx" style="left:21px;top:386px" width="40" height="14"><text x="2.00" y="10.10" font-size="6.40" fill="#333" textLength="32.40" lengthAdjust="spacingAndGlyphs" stroke="#333" stroke-width="0.20">Page 1 of 1</text></svg>
<div class="a" style="left:59px;top:387px;width:1px;height:13px;background:#d8d8d8"></div>
<svg style="left:64.5px;top:388.5px" width="8" height="9" viewBox="0 0 8 9">
<rect x="0.5" y="0.3" width="6.5" height="4" fill="none" stroke="#444" stroke-width="0.7"/>
<path d="M0.5 1.7 H7 M0.5 3 H7" stroke="#444" stroke-width="0.6"/>
<text x="3.8" y="8.6" font-family="Liberation Sans" font-size="3.4" font-weight="bold" text-anchor="middle" fill="#444">123</text>
</svg>
<svg class="tx" style="left:75px;top:386px" width="42" height="14"><text x="2.30" y="10.10" font-size="6.40" fill="#333" font-weight="bold" textLength="33.80" lengthAdjust="spacingAndGlyphs" stroke="#333" stroke-width="0.16">Word count</text></svg>
<div class="a" style="left:418.5px;top:387px;width:1px;height:13px;background:#d8d8d8"></div>
<svg class="tx" style="left:424px;top:386px" width="75" height="14"><text x="2.00" y="10.30" font-size="6.59" fill="#333" stroke="#333" stroke-width="0.20">English (United States)</text></svg>
<svg style="left:495.8px;top:391.5px" width="5" height="4" viewBox="0 0 5 4"><path d="M1 1.2 L2.5 2.7 L4 1.2" fill="none" stroke="#555" stroke-width="0.7"/></svg>
<svg style="left:504.5px;top:389.2px" width="10" height="9.5" viewBox="0 0 10 9.5">
<circle cx="4.9" cy="4.6" r="4.05" fill="#fff" stroke="#333" stroke-width="1"/>
<ellipse cx="4.9" cy="4.6" rx="1.45" ry="4" fill="none" stroke="#333" stroke-width="0.8"/>
</svg>
<div class="a" style="left:521px;top:388.2px;width:11px;height:10.8px;background:#7b838a"></div>
<svg style="left:521px;top:388.2px" width="11" height="10.8" viewBox="0 0 11 10.8">
<text x="5.3" y="5" font-family="Liberation Sans" font-size="4.6" font-weight="bold" text-anchor="middle" fill="#dfe2e5" style="-webkit-text-stroke:0">abc</text>
<path d="M4.6 7.2 L6 8.6 L9 5.2" fill="none" stroke="#fff" stroke-width="0.9"/>
</svg>
<div class="a" style="left:537.5px;top:387px;width:1px;height:13px;background:#d8d8d8"></div>
<svg style="left:543.5px;top:388.5px" width="10" height="10" viewBox="0 0 10 10">
<path d="M6.5 1.5 V0.6 H0.6 V9.3 H6.5 V7" fill="none" stroke="#444" stroke-width="0.9"/>
<path d="M2 7.6 L3 5.2 L7.6 1 L9 2.4 L4.6 6.6Z" fill="none" stroke="#444" stroke-width="0.8"/>
</svg>
<svg style="left:554px;top:391.5px" width="5" height="4" viewBox="0 0 5 4"><path d="M1 1.2 L2.5 2.7 L4 1.2" fill="none" stroke="#555" stroke-width="0.7"/></svg>
<div class="a" style="left:565px;top:387px;width:1px;height:13px;background:#d8d8d8"></div>
<svg style="left:573px;top:389.3px" width="8" height="8.6" viewBox="0 0 8 8.6">
<rect x="0.5" y="0.5" width="7" height="7.6" rx="0.6" fill="#fff" stroke="#3a3a3a" stroke-width="1"/>
<path d="M2.8 0.5 H5.2 L4 2.9Z M2.8 8.1 H5.2 L4 5.7Z M0.5 3.1 V5.5 L2.7 4.3Z M7.5 3.1 V5.5 L5.3 4.3Z" fill="#3a3a3a"/>
</svg>
<svg style="left:588.8px;top:389.5px" width="11" height="7" viewBox="0 0 11 7">
<path d="M0.6 0.5 V6.5 M10.4 0.5 V6.5" stroke="#444" stroke-width="0.9"/>
<path d="M2.2 3.5 H8.8 M3.7 2 L2.2 3.5 L3.7 5 M7.3 2 L8.8 3.5 L7.3 5" fill="none" stroke="#444" stroke-width="0.8"/>
</svg>
<div class="a" style="left:608.7px;top:393.5px;width:6px;height:0.8px;background:#555"></div>
<svg class="tx" style="left:622px;top:386px" width="43" height="14"><text x="2.20" y="10.30" font-size="6.45" fill="#333" stroke="#333" stroke-width="0.20">Zoom 100%</text></svg>
<div class="a" style="left:668.8px;top:393.4px;width:6px;height:0.8px;background:#666"></div>
<div class="a" style="left:671.4px;top:390.9px;width:0.8px;height:6px;background:#666"></div>
</div>
</body></html>
